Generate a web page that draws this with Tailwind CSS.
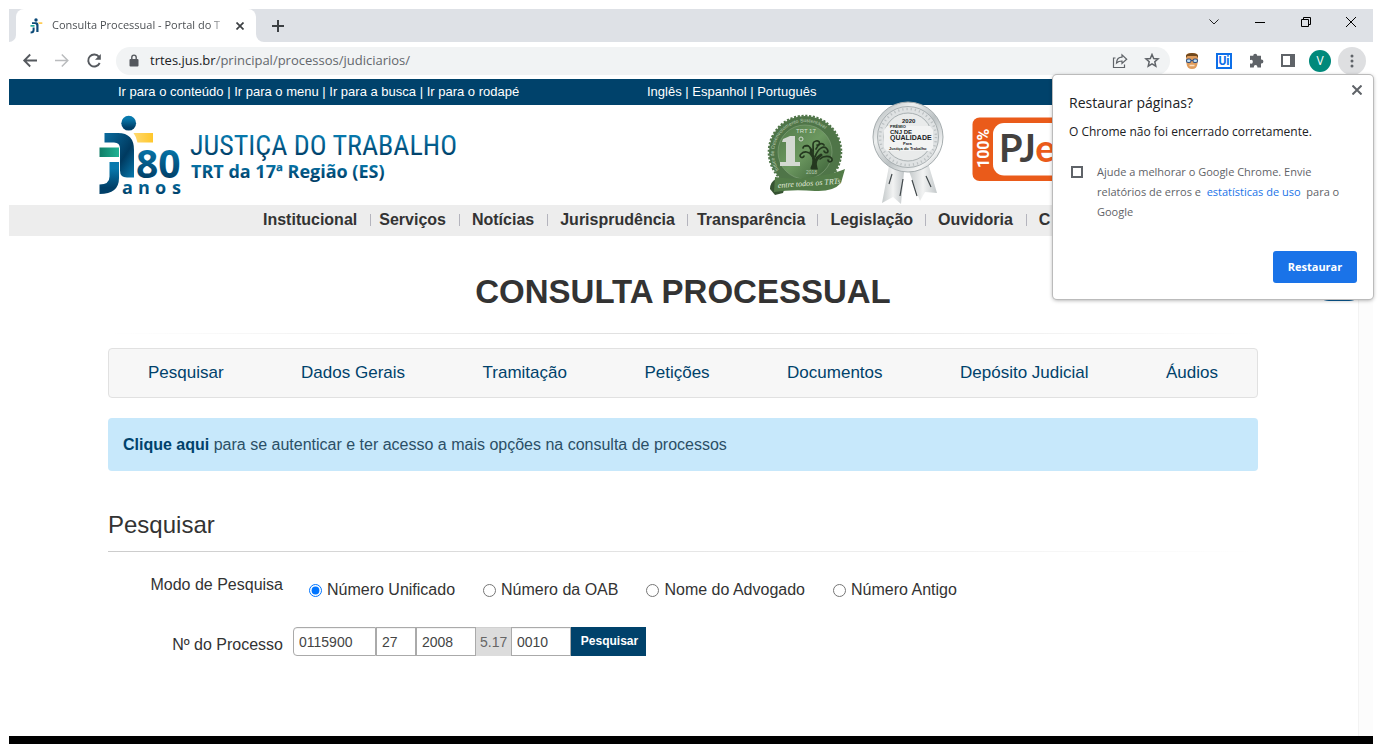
<!DOCTYPE html>
<html lang="pt-BR">
<head>
<meta charset="utf-8">
<title>Consulta Processual - Portal do TRT</title>
<script src="https://cdn.jsdelivr.net/npm/@tailwindcss/browser@4"></script>
</head>
<body class="bg-white font-['Liberation_Sans',Arial,sans-serif] text-[#333]">
<div class="relative flex min-h-screen flex-col px-[9px] pt-[9px]">

  <!-- Tab strip -->
  <div class="flex h-[33px] items-stretch bg-[#dee1e6] font-['Open_Sans',sans-serif]">
    <div class="w-[7px] shrink-0 bg-white"><div class="h-full rounded-br-lg bg-[#dee1e6]"></div></div>
    <div class="flex w-60 items-center rounded-t-lg bg-white pr-2 pl-3">
      <svg class="mr-2 size-4 shrink-0" viewBox="0 0 16 16" aria-hidden="true"><circle cx="8" cy="2" r="1.700" fill="#0b4a78"/><path d="M4 4.300h4.500q2 .2 2 2.400V14H8.300V7.500Q8.300 6 7 6H4z" fill="#0b4a78"/><path d="M10.300 4.200h4v1.700h-3.500z" fill="#fc5"/><path d="M2.500 7h4v1.700h-4z" fill="#2a9"/><path d="M4.600 9.500h2V12q0 3.500-4 3.500v-2q2 0 2-1.500z" fill="#0b4a78"/></svg>
      <span class="min-w-0 flex-1 overflow-hidden bg-linear-to-r from-[#45494d] from-90% to-transparent bg-clip-text text-[11px] whitespace-nowrap text-transparent">Consulta Processual - Portal do T</span>
      <button class="ml-1 flex size-4 items-center justify-center" aria-label="Fechar guia"><svg class="size-2" viewBox="0 0 8 8" fill="none" stroke="#3c4043" stroke-width="1.700"><path d="M.5.5l7 7M7.500.5l-7 7"/></svg></button>
    </div>
    <div class="flex-1 bg-white"><div class="flex h-full rounded-bl-lg bg-[#dee1e6]">
      <button class="flex w-11 items-center justify-center" aria-label="Nova guia"><svg class="size-3" viewBox="0 0 12 12" stroke="#3c4043" stroke-width="2"><path d="M6 0v12M0 6h12"/></svg></button>
      <div class="ml-auto flex items-start pt-[7px]">
        <button class="flex h-3 w-[46px] items-center justify-center" aria-label="Pesquisar guias"><svg class="h-3 w-3" viewBox="0 0 12 12" fill="none" stroke="#222"><path d="M1.500 3.500L6 8l4.500-4.500"/></svg></button>
        <button class="flex h-3 w-[46px] items-center justify-center" aria-label="Minimizar"><svg class="h-3 w-3" viewBox="0 0 12 12" stroke="#000"><path d="M1 6.500h10"/></svg></button>
        <button class="flex h-3 w-[46px] items-center justify-center" aria-label="Restaurar janela"><svg class="h-3 w-3" viewBox="0 0 12 12" fill="none" stroke="#000"><path d="M1.500 3.500h7v7h-7zM3.500 3.500v-2h7v7h-2"/></svg></button>
        <button class="flex h-3 w-[44px] items-center justify-center" aria-label="Fechar janela"><svg class="h-3 w-3" viewBox="0 0 12 12" stroke="#000"><path d="M1 1l10 10M11 1L1 11"/></svg></button>
      </div>
    </div></div>
  </div>

  <!-- Toolbar -->
  <div class="flex h-[37px] items-center bg-white pr-[7px] font-['Open_Sans',sans-serif]">
    <div class="flex items-center gap-4 pl-[13px]">
      <button aria-label="Voltar"><svg class="size-4" viewBox="0 0 16 16" fill="none" stroke="#55595e" stroke-width="1.800"><path d="M15 7.500H2.500M8.200 1.500l-6 6 6 6"/></svg></button>
      <button aria-label="Avançar"><svg class="size-4" viewBox="0 0 16 16" fill="none" stroke="#babcbe" stroke-width="1.500"><path d="M1 7.500h12.500M7.800 1.500l6 6-6 6"/></svg></button>
      <button aria-label="Recarregar"><svg class="size-4" viewBox="0 0 16 16"><path d="M13.700 10A6 6 0 1 1 13 3.800" fill="none" stroke="#55595e" stroke-width="1.900"/><path d="M14.800 1v5.800H9z" fill="#55595e"/></svg></button>
    </div>
    <div class="ml-3.5 flex h-7 min-w-0 flex-1 items-center rounded-full bg-[#f1f3f4] pr-2.5 pl-3">
      <svg class="mr-2.5 h-3.5 w-3 shrink-0" viewBox="0 0 12 14" aria-hidden="true"><rect x="1.500" y="5" width="9" height="7.500" rx="1" fill="#55595e"/><path d="M3.800 5V3.300a2.200 2.200 0 0 1 4.400 0V5" fill="none" stroke="#55595e" stroke-width="1.400"/></svg>
      <div class="min-w-0 flex-1 text-[13px] whitespace-nowrap text-[#63676c]"><span class="text-[#202124]">trtes.jus.br</span>/principal/processos/judiciarios/</div>
      <button class="mr-4" aria-label="Compartilhar"><svg class="size-4" viewBox="0 0 16 16" fill="none" stroke="#5f6368" stroke-width="1.200"><path d="M3.500 5H1.500v9.500h11V11.500M4.500 10c.3-4 2.500-5.800 5.500-5.800V1.800l4.700 4.400L10 10.500V8c-2.500 0-4 .5-5.500 2z"/></svg></button>
      <button aria-label="Adicionar aos favoritos"><svg class="size-4" viewBox="0 0 16 16" fill="none" stroke="#5f6368" stroke-width="1.500"><path d="M8 1.500l1.700 4 4.400.4-3.300 2.900 1 4.400L8 10.900l-3.800 2.300 1-4.400-3.300-2.900 4.400-.4z"/></svg></button>
    </div>
    <div class="ml-3.5 flex items-center">
      <button class="mr-4" aria-label="Extensão"><svg class="size-4" viewBox="0 0 16 16"><path d="M2 3q0-3 6-3t6 3l-.5 7.500Q13 16 8 16t-5.500-5.500z" fill="#df9c5c"/><path d="M2 5V2.500Q3 0 8 0q5 0 6 2.500V5l-1.500-2h-9z" fill="#70481d"/><g fill="#b9def5" stroke="#35507e" stroke-width="1.100"><rect x="2.500" y="6" width="4.500" height="3.500" rx="1.600"/><rect x="9" y="6" width="4.500" height="3.500" rx="1.600"/></g><path d="M7 7.500h2" stroke="#35507e"/><path d="M5.500 12.500h5" stroke="#fbe0c4" stroke-width="1.500"/></svg></button>
      <button class="mr-4 flex size-4 items-center justify-center border-2 border-[#0d6fe8] bg-white font-['Roboto',sans-serif] text-xs leading-none font-bold text-[#0d6fe8]">Ui</button>
      <button class="mr-4" aria-label="Extensões"><svg class="size-4" viewBox="0 0 16 16" fill="#5f6368"><path d="M5.200 2.800a2 2 0 1 1 4 0H13v3.800h.5a1.900 1.900 0 1 1 0 3.800H13v4.100H9.400v-.6a1.800 1.800 0 1 0-3.600 0v.6H2v-3.900h.5a1.900 1.900 0 1 0 0-3.700H2V2.800z"/></svg></button>
      <button class="mr-[13px]" aria-label="Painel lateral"><svg class="size-4" viewBox="0 0 16 16"><path d="M2 2h12v11H2z" fill="none" stroke="#5f6368" stroke-width="2"/><path d="M10 2h4v11h-4z" fill="#5f6368"/></svg></button>
      <button class="mr-[7px] flex size-[22px] items-center justify-center rounded-full bg-[#00897b] text-xs text-white">V</button>
      <button class="flex size-7 items-center justify-center rounded-full bg-[#dedfe1]" aria-label="Menu do Chrome"><svg class="size-4" viewBox="0 0 16 16" fill="#5f6368"><circle cx="8" cy="3" r="1.500"/><circle cx="8" cy="8" r="1.500"/><circle cx="8" cy="13" r="1.500"/></svg></button>
    </div>
  </div>

  <!-- Site -->
  <div class="flex flex-1 flex-col">
    <div class="flex h-[26px] items-center bg-[#00426b] pl-[109px] text-[13px] whitespace-nowrap text-white">
      <nav class="w-[529px]" aria-label="Atalhos"><a href="#">Ir para o conteúdo</a> | <a href="#">Ir para o menu</a> | <a href="#">Ir para a busca</a> | <a href="#">Ir para o rodapé</a></nav>
      <nav aria-label="Idiomas"><a href="#">Inglês</a> | <a href="#">Espanhol</a> | <a href="#">Português</a></nav>
    </div>

    <header class="flex h-[100px] items-start pl-[88px]">
      <a href="#" aria-label="Justiça do Trabalho" class="mt-[9px] mr-[298px]">
        <svg class="h-[84px] w-[370px]" viewBox="97 114 370 84">
          <defs><linearGradient id="b" x1="0" y1="0" x2="0" y2="1"><stop offset="0.200" stop-color="#0879ad"/><stop offset="0.800" stop-color="#003f68"/></linearGradient><linearGradient id="y"><stop stop-color="#ffd970"/><stop offset="1" stop-color="#ffc72b"/></linearGradient><linearGradient id="g"><stop stop-color="#107e68"/><stop offset="1" stop-color="#1fb394"/></linearGradient><linearGradient id="j" x1="0" y1="0" x2="1" y2="1"><stop stop-color="#0a6c9f"/><stop offset=".6" stop-color="#003a60"/><stop offset="1" stop-color="#0879ad"/></linearGradient></defs>
          <circle cx="128.700" cy="123.200" r="7.400" fill="url(#b)"/>
          <path d="M104.500 133H118q16 0 16 17v27.500h-7q-7 0-7-7v-22q0-6-6-6h-9.500z" fill="url(#j)"/>
          <path d="M133.500 133H153v9.500h-15.500q-1-5.500-4-9.500z" fill="url(#y)"/>
          <path d="M99.500 147.500H119v9.500H99.500z" fill="url(#g)"/>
          <path d="M109.500 162H119v16q0 16-19.500 16v-9.500q10 0 10-8z" fill="url(#b)"/>
          <g fill="url(#b)" font-family="Open Sans, sans-serif" font-weight="700">
            <text x="136" y="178" font-size="39">80</text>
            <text x="122 138 155 172" y="194" font-size="18">anos</text>
            <text x="191" y="178" font-size="18">TRT da 17ª Região (ES)</text>
          </g>
          <text x="190" y="155" font-family="Roboto Condensed, Liberation Sans Narrow, sans-serif" font-size="28" fill="url(#b)">JUSTIÇA DO TRABALHO</text>
        </svg>
      </a>

      <svg class="mt-2 h-[84px] w-[82px] shrink-0" viewBox="765 113 82 84" role="img" aria-label="1º lugar, entre todos os TRTs">
        <defs><linearGradient id="sg" x1="0" y1="0" x2="1" y2="1"><stop stop-color="#527a49"/><stop offset=".5" stop-color="#6c9860"/><stop offset="1" stop-color="#385c34"/></linearGradient><path id="arc1" d="M779 170a31 31 0 1 1 52 0"/></defs>
        <circle cx="805" cy="152" r="36" fill="#4f7548"/>
        <circle cx="805" cy="152" r="36.300" fill="none" stroke="#4f7548" stroke-width="2" stroke-dasharray="2.200 1.600"/>
        <circle cx="805" cy="152" r="27" fill="url(#sg)" stroke="#86a47d" stroke-width=".6"/>
        <text font-family="Liberation Sans" font-size="5" fill="#b9cbb2"><textPath href="#arc1">Índice de Desenvolvimento Sustentável</textPath></text>
        <text x="796" y="133" font-family="Liberation Sans" font-size="6" fill="#d5e0d0">TRT 17</text>
        <path d="M783 139l7-3h5v26h5v4h-20v-4h6v-20h-4z" fill="#d4d9d2"/>
        <circle cx="801" cy="139" r="2" fill="none" stroke="#d4d9d2"/>
        <g fill="none" stroke="#24371f" stroke-linecap="round"><path d="M812 168c3-5 2-11-1-16m1 16h4c-2-6 0-10 5-13" stroke-width="3"/><path d="M812 156c-3-5-8-5-11-2s2 5 3 2m8-5c-2-6-8-7-9-3m10 6c1-8-2-12 3-13s4 5 1 4m-2 12c3-9 9-12 12-8s-2 5-3 2m-4 8c4-4 11-3 12 0s-4 4-4 1m-17-8c0-5-3-7-5-6m10 3c2-5 6-7 8-4" stroke-width="1.700"/></g>
        <text x="806" y="174" font-family="Liberation Sans" font-size="5" fill="#b9cbb2">2018</text>
        <path d="M776 179q-6 3-6 10l5 6 8-2 2-6z" fill="#365332"/>
        <path d="M775 177q22 4 54-3 12-3 16-5l-4 14q-8 9-26 8-22-2-41 1z" fill="#527b48"/>
        <text x="778" y="188" font-family="Liberation Serif" font-style="italic" font-size="8" fill="#e1eadd" transform="rotate(-4 778 188)">entre todos os TRTs</text>
      </svg>

      <svg class="-mt-1 ml-[25px] h-[104px] w-[72px] shrink-0" viewBox="872 101 72 104" role="img" aria-label="Prêmio CNJ de Qualidade">
        <defs><linearGradient id="si" x1="0" y1="0" x2="1" y2="1"><stop stop-color="#a3aaad"/><stop offset=".3" stop-color="#eef0f0"/><stop offset=".55" stop-color="#bcc2c4"/><stop offset=".8" stop-color="#f4f5f5"/><stop offset="1" stop-color="#9ba2a5"/></linearGradient><linearGradient id="ri"><stop stop-color="#c5cacb"/><stop offset=".5" stop-color="#f2f3f3"/><stop offset="1" stop-color="#c3c8ca"/></linearGradient></defs>
        <path d="M889 166l15 6-3 32-8-7-11 6z" fill="url(#ri)"/><path d="M909 171l19-8 9 30-12-1-5 9z" fill="url(#ri)"/>
        <path d="M892 174l-3 10m14-5l-3 17m12-16l5 16m9-20l5 11" stroke="#42494c" stroke-width="1.200" fill="none"/>
        <circle cx="908" cy="137" r="35" fill="url(#si)" stroke="#a6adaf"/>
        <circle cx="908" cy="137" r="30.500" fill="#dfe2e3" stroke="#9aa2a4" stroke-width=".8"/>
        <circle cx="908" cy="137" r="28" fill="none" stroke="#bcc1c3" stroke-width="2.500" stroke-dasharray="1.200 3"/>
        <circle cx="908" cy="137" r="24" fill="#e9ebeb" stroke="#a9b0b2"/>
        <path d="M887 126h43l3 4v18l-3 3h-43l-3-3v-18z" fill="#f2f3f3"/>
        <g font-family="Liberation Sans" font-weight="700" fill="#202426"><text x="902" y="123" font-size="6">2020</text><text x="890" y="128" font-size="4">PRÊMIO</text><text x="890" y="134" font-size="6">CNJ DE</text><text x="890" y="140" font-size="7">QUALIDADE</text><text x="903" y="145" font-size="4">Para</text><text x="889" y="150" font-size="4">Justiça do Trabalho</text></g>
      </svg>

      <svg class="mt-3 ml-7 h-16 w-[120px] shrink-0" viewBox="972 117 120 64" role="img" aria-label="100% PJe">
        <rect x="972.500" y="117.500" width="119" height="63.500" rx="7" fill="#ea5b1a"/>
        <rect x="993" y="123" width="93" height="52.500" rx="11" fill="#fff"/>
        <text transform="translate(989 168) rotate(-90)" font-family="Roboto, sans-serif" font-size="16" font-weight="700" fill="#fff">100%</text>
        <text x="999" y="162" font-family="Lato, sans-serif" font-size="38" font-weight="700" fill="#43413f">PJ<tspan fill="#ea5b1a">e</tspan></text>
      </svg>
    </header>

    <nav class="flex h-[31px] items-center bg-[#ededed] pb-0.5 pl-[254px] text-base font-bold whitespace-nowrap" aria-label="Principal">
      <a href="#" class="pr-[13px] leading-5">Institucional</a>
      <span class="h-3 w-px bg-[#b4b4bd]"></span><a href="#" class="pr-[13px] pl-2 leading-5">Serviços</a>
      <span class="h-3 w-px bg-[#b4b4bd]"></span><a href="#" class="pr-[13px] pl-3 leading-5">Notícias</a>
      <span class="h-3 w-px bg-[#b4b4bd]"></span><a href="#" class="px-3 leading-5">Jurisprudência</a>
      <span class="h-3 w-px bg-[#b4b4bd]"></span><a href="#" class="pr-3 pl-[9px] leading-5">Transparência</a>
      <span class="h-3 w-px bg-[#b4b4bd]"></span><a href="#" class="px-3 leading-5">Legislação</a>
      <span class="h-3 w-px bg-[#b4b4bd]"></span><a href="#" class="pr-[13px] pl-3 leading-5">Ouvidoria</a>
      <span class="h-3 w-px bg-[#b4b4bd]"></span><a href="#" class="pl-3 leading-5">C</a>
    </nav>

    <div class="flex flex-1">
      <main class="min-w-0 flex-1 pr-[100px] pl-[99px]">
        <h1 class="pt-9 text-center text-[33px] leading-10 font-bold">CONSULTA PROCESSUAL</h1>
        <div class="mt-[21px] h-px bg-linear-to-r from-transparent via-[#ddd] to-transparent"></div>
        <nav class="mt-3.5 flex h-[50px] items-center justify-between rounded border border-[#e1e1e1] bg-[#f7f7f7] px-[39px] text-[17px] text-[#00426b]" aria-label="Seções">
          <a href="#">Pesquisar</a><a href="#">Dados Gerais</a><a href="#">Tramitação</a><a href="#">Petições</a><a href="#">Documentos</a><a href="#">Depósito Judicial</a><a href="#">Áudios</a>
        </nav>
        <p class="mt-5 flex h-[53px] items-center rounded bg-[#c7e8fb] px-[15px] text-base text-[#2b4f66]"><span><a href="#" class="font-bold text-[#00426b]">Clique aqui</a> para se autenticar e ter acesso a mais opções na consulta de processos</span></p>
        <h2 class="mt-9 pb-2 text-2xl leading-9">Pesquisar</h2>
        <div class="h-px bg-linear-to-r from-[#ccc] to-transparent"></div>

        <form class="text-base">
          <fieldset class="mt-[23px] flex items-start">
            <legend class="float-left w-[175px] text-right leading-5">Modo de Pesquisa</legend>
            <div class="flex gap-7 pt-[5px] pl-[26px] leading-5 whitespace-nowrap">
              <label class="flex items-center gap-[5px]"><input type="radio" name="modo" checked class="size-[13px] accent-[#0075ff]">Número Unificado</label>
              <label class="flex items-center gap-[5px]"><input type="radio" name="modo" class="size-[13px]">Número da OAB</label>
              <label class="flex items-center gap-[5px]"><input type="radio" name="modo" class="size-[13px]">Nome do Advogado</label>
              <label class="flex items-center gap-[5px]"><input type="radio" name="modo" class="size-[13px]">Número Antigo</label>
            </div>
          </fieldset>
          <div class="mt-[27px] flex text-sm">
            <label for="num" class="mr-2.5 w-[175px] pt-2 text-right text-base leading-5">Nº do Processo</label>
            <input id="num" value="0115900" class="h-[29px] w-[83px] rounded-l border border-[#aaa] px-[5px] text-[#444] inset-shadow-2xs">
            <input aria-label="Dígito" value="27" class="h-[29px] w-10 border border-[#aaa] px-[5px] text-[#444] inset-shadow-2xs">
            <input aria-label="Ano" value="2008" class="h-[29px] w-[60px] border border-[#aaa] px-[5px] text-[#444] inset-shadow-2xs">
            <input aria-label="Tribunal" value="5.17" disabled class="h-[29px] w-[35px] bg-[#dcdcdc] px-1 text-[#666] inset-shadow-2xs">
            <input aria-label="Origem" value="0010" class="h-[29px] w-[60px] border border-[#aaa] px-[5px] text-[#444] inset-shadow-2xs">
            <button type="button" class="h-[29px] w-[75px] bg-[#00426b] pb-0.5 pl-0.5 text-xs font-bold text-white">Pesquisar</button>
          </div>
        </form>
      </main>
      <div class="w-[15px] border-l border-[#f3f3f3] bg-[#fcfcfc]"></div>
    </div>
    <div class="h-2 bg-black"></div>
  </div>

  <button class="absolute top-[257px] right-[21px] h-11 w-[44px] rounded-xl bg-[#0a5c96]" aria-label="Acessibilidade"></button>

  <!-- Restore bubble -->
  <section class="absolute top-[75px] right-[9px] flex h-56 w-80 flex-col rounded bg-white px-4 pt-4 pb-4 font-['Open_Sans',sans-serif] text-[#202124] shadow-[0_0_0_1px_#bbb,0_1px_4px_#0006]" aria-label="Restaurar páginas">
    <button class="absolute top-2.5 right-[11px]" aria-label="Fechar"><svg class="size-2.5" viewBox="0 0 10 10" stroke="#5f6368" stroke-width="2"><path d="M.5.5l9 9M9.500.5l-9 9"/></svg></button>
    <h2 class="text-sm leading-6">Restaurar páginas?</h2>
    <p class="mt-[7px] text-xs leading-5">O Chrome não foi encerrado corretamente.</p>
    <label class="mt-5 flex gap-3.5 text-[11px] leading-5 text-[#5f6368]"><input type="checkbox" class="mt-1 ml-0.5 size-3 shrink-0 appearance-none border-2 border-[#5f6368]"><span>Ajude a melhorar o Google Chrome. Envie<br>relatórios de erros e &nbsp;<a href="#" class="text-[#1a73e8]">estatísticas de uso</a> &nbsp;para o<br>Google</span></label>
    <button class="mt-auto h-8 w-[84px] self-end rounded-[3px] bg-[#1a73e8] text-[11px] font-bold text-white">Restaurar</button>
  </section>
</div>
</body>
</html>
